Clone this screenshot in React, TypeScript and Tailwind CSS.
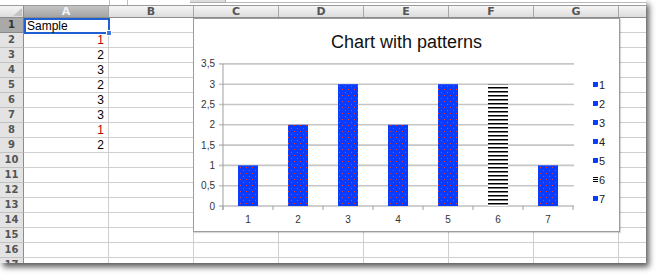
import React from "react";

const COLS = ["A", "B", "C", "D", "E", "F", "G"];
const DATA: (number | null)[] = [null, 1, 2, 3, 2, 3, 3, 1, 2];
const BARS = [1, 2, 3, 2, 3, 3, 1];

function Chart() {
  const y = (v: number) => 187 - v * 40.6;
  const ticks = [0, 0.5, 1, 1.5, 2, 2.5, 3, 3.5];
  return (
    <svg width={425} height={212} viewBox="0 0 425 212" style={{ fontFamily: '"Liberation Sans", Arial, sans-serif' }}>
      <defs>
        <pattern id="dots" patternUnits="userSpaceOnUse" width="6" height="6">
          <rect width="6" height="6" fill="#0a3cff" />
          <rect x="1" y="1" width="1" height="1" fill="#ff3a1a" />
          <rect x="4" y="4" width="1" height="1" fill="#ff3a1a" />
        </pattern>
        <pattern id="stripes" patternUnits="userSpaceOnUse" width="4" height="4">
          <rect width="4" height="4" fill="#ffffff" />
          <rect y="0" width="4" height="1.5" fill="#000000" />
        </pattern>
      </defs>
      <rect x="0" y="0" width="425" height="212" fill="#ffffff" />
      <text x="212.5" y="28.5" textAnchor="middle" fontSize="18" fill="#111">
        Chart with patterns
      </text>
      {ticks.map((t) => (
        <g key={t}>
          <line x1={25} x2={380} y1={y(t)} y2={y(t)} stroke={t === 0 ? "#a0a0a0" : "#c6c6c6"} strokeWidth={t === 0 ? 1.2 : 1.6} />
          <text x={21} y={y(t) + 3.5} textAnchor="end" fontSize="10" fill="#333">
            {String(t).replace(".", ",")}
          </text>
        </g>
      ))}
      <line x1={29} x2={29} y1={y(3.5)} y2={191} stroke="#a0a0a0" strokeWidth={1} />
      {Array.from({ length: 8 }).map((_, k) => (
        <line key={k} x1={29 + 50 * k} x2={29 + 50 * k} y1={187} y2={191} stroke="#a0a0a0" strokeWidth={1} />
      ))}
      {BARS.map((v, i) => (
        <rect
          key={i}
          x={44 + 50 * i}
          y={y(v)}
          width={20}
          height={187 - y(v)}
          fill={i === 5 ? "url(#stripes)" : "url(#dots)"}
        />
      ))}
      {BARS.map((_, i) => (
        <text key={i} x={54 + 50 * i} y={204} textAnchor="middle" fontSize="10" fill="#333">
          {i + 1}
        </text>
      ))}
      {BARS.map((_, i) => {
        const cy = 66 + 19 * i;
        return (
          <g key={i}>
            {i === 5 ? (
              <g>
                <rect x={399} y={cy - 3} width={5} height={1} fill="#000" />
                <rect x={399} y={cy - 1} width={5} height={1} fill="#000" />
                <rect x={399} y={cy + 1} width={5} height={1} fill="#000" />
              </g>
            ) : (
              <g>
                <rect x={399} y={cy - 3} width={5} height={5} fill="#0a3cff" />
                <rect x={403} y={cy + 1} width={1} height={1} fill="#ff3a1a" />
              </g>
            )}
            <text x={405} y={cy + 4} fontSize="11" fill="#222">
              {i + 1}
            </text>
          </g>
        );
      })}
    </svg>
  );
}

export default function App() {
  const rows = Array.from({ length: 17 }, (_, i) => i + 1);
  return (
    <div className="w-[656px] h-[275px] bg-white relative" style={{ fontFamily: '"Liberation Sans", Arial, sans-serif' }}>
      <div className="w-[646px] h-[263px] bg-white overflow-hidden relative shadow-[3px_4px_6px_rgba(0,0,0,0.65)]">
        {/* top strip */}
        <div className="h-[6px] border-b border-[#9a9a9a] flex relative">
          <div className="w-[110px] border-r border-[#c0c0c0]" />
          <div className="w-[18px] border-r border-[#c0c0c0]" />
          <div className="w-[62px]" />
          <div className="w-[36px] h-[3px] bg-[#dcdcdc] border-b border-r border-[#b0b0b0]" />
          <div className="flex-1 h-[3px] border-b border-[#b8b8b8]" />
        </div>
        {/* header */}
        <div className="h-[12px] flex bg-gradient-to-b from-[#f6f6f6] to-[#dcdcdc] border-b border-[#8c8c8c]">
          <div className="w-[24px] border-r border-[#8c8c8c] relative">
            <div className="absolute right-[1px] bottom-[1px] w-0 h-0 border-l-[9px] border-l-transparent border-b-[8px] border-b-[#c4c4c4]" />
          </div>
          {COLS.map((c, i) => (
            <div
              key={c}
              className={`w-[85px] border-r border-[#a8a8a8] flex items-center justify-center text-[11px] font-bold leading-none ${
                i === 0 ? "bg-gradient-to-b from-[#c4c4c4] to-[#a4a4a4] text-[#f2f2f2]" : "text-[#555]"
              }`}
              style={{ fontFamily: '"DejaVu Sans", sans-serif' }}
            >
              {c}
            </div>
          ))}
          <div className="flex-1" />
        </div>
        {/* rows */}
        {rows.map((r) => {
          const v = DATA[r - 1];
          return (
            <div key={r} className="h-[15px] flex">
              <div
                className={`w-[24px] border-r border-b flex items-center justify-center text-[10px] font-bold leading-none ${
                  r === 1 ? "bg-[#a9a9a9] border-r-[#7a7a7a] border-b-[#8a8a8a] text-[#333]" : "bg-[#e3e3e3] border-r-[#8c8c8c] border-b-[#c2c2c2] text-[#555]"
                }`}
                style={{ fontFamily: '"DejaVu Sans", sans-serif' }}
              >
                {r}
              </div>
              <div className="w-[85px] border-r border-b border-[#cfcfcf] flex items-center justify-end pr-[4px] text-[12px] leading-none">
                {r === 1 ? null : v !== null && v !== undefined ? (
                  <span className={v === 1 ? "text-[#b80000]" : "text-black"}>{v}</span>
                ) : null}
              </div>
              {COLS.slice(1).map((c) => (
                <div key={c} className="w-[85px] border-r border-b border-[#cfcfcf]" />
              ))}
              <div className="flex-1 border-b border-[#cfcfcf]" />
            </div>
          );
        })}
        {/* selection A1 */}
        <div className="absolute left-[24px] top-[18px] w-[86px] h-[16px] border-2 border-[#1f5fd4] flex items-center pl-[1px] text-[12px] leading-none text-black">
          Sample
        </div>
        <div className="absolute left-[106px] top-[30px] w-[6px] h-[6px] bg-[#3a7ae8] border border-white" />
        {/* chart */}
        <div className="absolute left-[193px] top-[18px] border border-[#9c9c9c] shadow-[1px_1px_1px_rgba(0,0,0,0.15)]">
          <Chart />
        </div>
      </div>
    </div>
  );
}
